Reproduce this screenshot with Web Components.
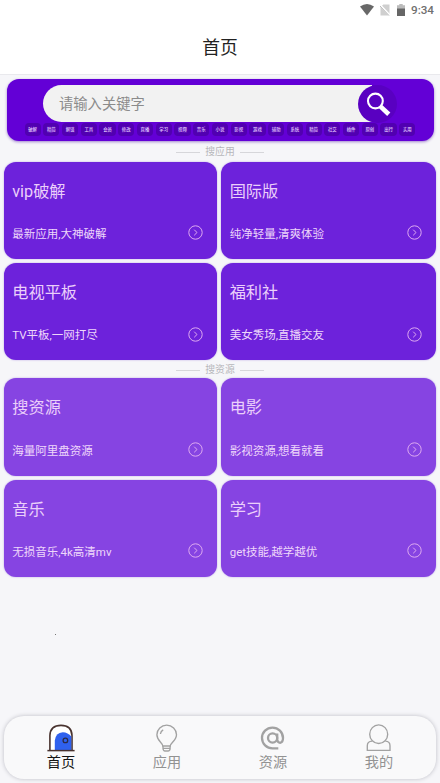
<!DOCTYPE html>
<html lang="zh-CN">
<head>
<meta charset="utf-8">
<title>首页</title>
<style>
html,body{margin:0;height:100%;overflow:hidden}
body{font-family:Roboto,"Noto Sans CJK SC",sans-serif;background:#f6f6f9}
</style>
</head>
<body>
<home-app></home-app>
<script>
const define=(name,html)=>customElements.define(name,class extends HTMLElement{
  connectedCallback(){
    if(this.shadowRoot)return;
    this.attachShadow({mode:'open'}).innerHTML=typeof html==='function'?html(this):html;
  }
});

define('status-bar',`<style>
:host{display:flex;height:20px;align-items:center;justify-content:flex-end;padding-right:6px;box-sizing:border-box;color:#707070;font-size:11.7px;font-weight:500;line-height:20px}
svg{display:block}.wifi{margin-right:6px}.sim{margin-right:7px}.bat{margin-right:6px}
</style>
<svg class="wifi" width="14" height="12" viewBox="0 0 14 12"><path d="M0 2.6Q7-2.6 14 2.6L7 11.5Z" fill="#686868"/></svg>
<svg class="sim" width="10" height="12" viewBox="0 0 10 12"><path d="M3.3.5H9.5V11.5H.5V3.3Z" fill="#cfcfcf"/><path d="M0 1L10 11.5" stroke="#fff" stroke-width="2"/><path d="M0 2L9 11.5" stroke="#bbb" stroke-width="1"/></svg>
<svg class="bat" width="8" height="12" viewBox="0 0 8 12"><path d="M0 1.2H2.3V0H5.7V1.2H8V5H0Z" fill="#bbb"/><path d="M0 4.5H8V12H0Z" fill="#666"/></svg>
<span>9:34</span>`);

define('title-bar',`<style>
:host{display:flex;height:55px;padding-bottom:2px;align-items:center;justify-content:center;box-sizing:border-box;border-bottom:1px solid #e9e9ed;color:#222;font-size:17.8px}
</style><slot></slot>`);

define('search-panel',`<style>
:host{display:flex;flex-direction:column;box-sizing:border-box;margin:4.2px 6.5px 0;height:62px;padding-top:5.5px;border-radius:12px;background:#6300d6;box-shadow:0 1px 3px #9f82ce}
.search{display:flex;margin-left:36.5px;height:37.5px}
.field{box-sizing:border-box;width:329px;height:37.5px;border-radius:19px 0 0 19px;background:#f2f2f2;color:#8b8b8b;font-size:14.3px;line-height:38.5px;padding-left:16px}
button{width:39px;height:38px;margin:0 0 0 -14px;border:0;border-radius:50%;background:#5900c1;padding:0;display:flex;align-items:center;justify-content:center}
.tags{display:flex;justify-content:space-between;margin:1.2px 18px 0}
</style>
<div class="search"><div class="field">请输入关键字</div><button aria-label="搜索"><svg width="26" height="26" viewBox="0 0 26 26"><circle cx="10.4" cy="10" r="7.4" fill="none" stroke="#fff" stroke-width="2.1"/><path d="M15 15L18 18" stroke="#fff" stroke-width="2"/><path d="M17.3 17.2L22.4 22" stroke="#fff" stroke-width="4.6" stroke-linecap="square" transform="translate(-.3 -.3)"/></svg></button></div>
<div class="tags"><slot></slot></div>`);

define('search-tag',`<style>
:host{display:flex;align-items:center;justify-content:center;width:16.2px;height:13px;border-radius:4px;background:#5100b1;color:#e3c9ff;font-size:4.4px;font-weight:500;line-height:13px;white-space:nowrap}
</style><slot></slot>`);

define('section-label',`<style>
:host{display:flex;align-items:center;justify-content:center;gap:5px;height:var(--h);padding-top:1.5px;box-sizing:border-box;color:#b7b7bb;font-size:9.8px;line-height:14px}
i{width:24.5px;height:1px;background:#d6d6da}
</style><i></i><slot></slot><i></i>`);

define('card-grid',`<style>
:host{display:grid;grid-template-columns:213.4px 214.4px;grid-auto-rows:97.5px;gap:3.7px 4px;margin-left:4.1px}
</style><slot></slot>`);

define('app-card',el=>`<style>
:host{display:flex;flex-direction:column;box-sizing:border-box;padding:17px 14px 0 8.2px;border-radius:12px;background:${el.hasAttribute('light')?'#8644e2':'#6d22db'};box-shadow:0 0 2px #b79fe5;color:#ebcffa}
.title{font-size:16.2px;line-height:26px}
.foot{display:flex;align-items:center;justify-content:space-between;margin-top:18.3px;height:20px;font-size:11.5px;color:#eed7fa;white-space:nowrap}
svg{display:block}
</style><div class="title">${el.getAttribute('heading')}</div><div class="foot"><slot></slot><svg width="15" height="15" viewBox="0 0 15 15" fill="none" stroke="#dda9f0"><circle cx="7.5" cy="7.5" r="6.7" stroke-width="1"/><path d="M6.2 4.7L9 7.5L6.2 10.3" stroke-width="1"/></svg></div>`);

define('bottom-nav',`<style>
:host{display:grid;grid-template-columns:repeat(4,106px);justify-content:center;box-sizing:border-box;width:432px;height:63px;margin:0 4px 4px;border-radius:20px;background:#f9f9fa;box-shadow:0 0 4px #bcbcc4}
</style><slot></slot>`);

const icons={
home:`<path d="M2.9 26V11.5Q3.4 1.4 14 1.4Q24.6 1.4 25 11.5V26" fill="#fff" stroke="#49332f" stroke-width="1.6"/><path d="M7.8 26V16.5Q8.6 8.8 15.8 8.2Q21 8.4 24.3 12.5V26Z" fill="#2f61ee" stroke="none"/><circle cx="18.4" cy="16.4" r="2.3" fill="none" stroke="#2b2b48" stroke-width="1.3"/><path d="M.4 26.6H27.6" stroke="#49332f" stroke-width="1.5"/>`,
bulb:`<path d="M9.8 22C9.5 18.5 3.9 16.5 3.9 10.7A9.8 9.6 0 0 1 23.5 10.7C23.5 16.5 17.5 18.5 17.2 22Z"/><path d="M10 22V24.5Q10.2 27 12 27H15Q17 27 17.1 24.5V22M10 24.3H17M7.4 10Q7.8 7 10.2 5.8"/>`,
at:`<g stroke-width="2.3"><circle cx="13.6" cy="14" r="4.6"/><path d="M18.2 9.4V15.7Q18.6 18.8 21.1 18.8Q24 18.4 24 14A10.5 10.4 0 1 0 13.6 24.4H19.3"/></g>`,
user:`<ellipse cx="13.7" cy="10.2" rx="9" ry="9.3"/><path d="M7.2 17.2Q2.3 17.4 2.3 21.8V26.4H25V21.8Q25 17.4 20.4 17.2"/>`};
define('nav-item',el=>`<style>
:host{display:flex;flex-direction:column;align-items:center;padding-top:8px;color:${el.hasAttribute('active')?'#151515':'#929292'};font-size:14.2px;line-height:20px}
svg{display:block;flex-shrink:0}
</style><svg width="28" height="28" viewBox="0 0 28 28" fill="none" stroke="#a2a2a2" stroke-width="1.35">${icons[el.getAttribute('icon')]}</svg><slot></slot>`);

define('home-app',`<style>
:host{display:flex;flex-direction:column;width:440px;height:783px;overflow:hidden}
header{background:#fff}
main{display:flow-root;flex:1}
.dot{width:1px;height:1px;margin:56.6px 0 0 55px;background:#777}
</style>
<header><status-bar></status-bar><title-bar>首页</title-bar></header>
<main><search-panel>${'破解 精简 解锁 工具 会员 修改 直播 学习 视频 音乐 小说 影视 游戏 辅助 系统 精简 社交 插件 原创 出行 实用'.split(' ').map(t=>`<search-tag>${t}</search-tag>`).join('')}</search-panel>
<section-label style="--h:20.4px">搜应用</section-label>
<card-grid>
<app-card heading="vip破解">最新应用,大神破解</app-card><app-card heading="国际版">纯净轻量,清爽体验</app-card>
<app-card heading="电视平板">TV平板,一网打尽</app-card><app-card heading="福利社">美女秀场,直播交友</app-card>
</card-grid>
<section-label style="--h:18.2px">搜资源</section-label>
<card-grid>
<app-card light heading="搜资源">海量阿里盘资源</app-card><app-card light heading="电影">影视资源,想看就看</app-card>
<app-card light heading="音乐">无损音乐,4k高清mv</app-card><app-card light heading="学习">get技能,越学越优</app-card>
</card-grid><div class="dot"></div></main>
<bottom-nav><nav-item icon="home" active>首页</nav-item><nav-item icon="bulb">应用</nav-item><nav-item icon="at">资源</nav-item><nav-item icon="user">我的</nav-item></bottom-nav>`);
</script>
</body>
</html>
